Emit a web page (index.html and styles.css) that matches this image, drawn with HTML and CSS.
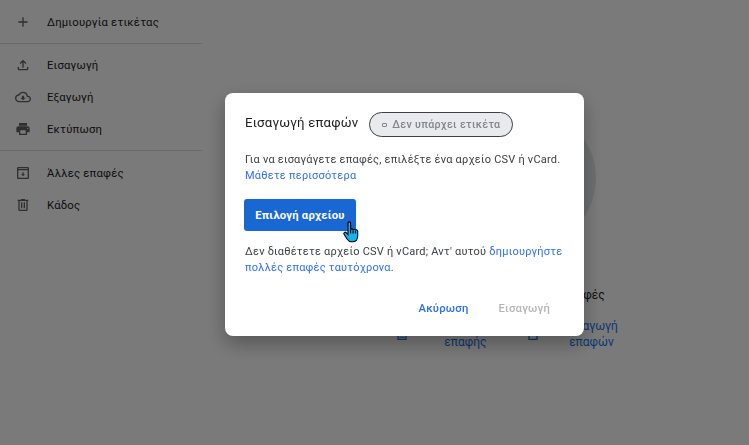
FILE: index.html
```html
<!DOCTYPE html>
<html lang="el">
<head>
    <meta charset="UTF-8">
    <meta name="viewport" content="width=device-width, initial-scale=1.0">
    <title>Εισαγωγή επαφών</title>
    <link rel="stylesheet" href="styles.css">
</head>
<body>
    <div class="page">
        <!-- Sidebar -->
        <nav class="sidebar">
            <div class="nav-group first">
                <div class="nav-item">
                    <svg class="nav-icon" viewBox="0 0 24 24"><path d="M19 13h-6v6h-2v-6H5v-2h6V5h2v6h6v2z"/></svg>
                    <span>Δημιουργία ετικέτας</span>
                </div>
            </div>
            <div class="nav-group">
                <div class="nav-item">
                    <svg class="nav-icon" viewBox="0 0 24 24"><path d="M18 15v3H6v-3H4v3c0 1.100.9 2 2 2h12c1.100 0 2-.9 2-2v-3h-2zM7 9l1.410 1.410L11 7.830V16h2V7.830l2.590 2.580L17 9l-5-5-5 5z"/></svg>
                    <span>Εισαγωγή</span>
                </div>
                <div class="nav-item">
                    <svg class="nav-icon" viewBox="0 0 24 24"><path d="M19.350 10.040A7.490 7.490 0 0 0 12 4C9.110 4 6.600 5.640 5.350 8.040A5.994 5.994 0 0 0 0 14c0 3.310 2.690 6 6 6h13c2.760 0 5-2.240 5-5 0-2.640-2.050-4.780-4.650-4.960zM19 18H6c-2.210 0-4-1.790-4-4 0-2.050 1.530-3.760 3.560-3.970l1.070-.11.5-.95A5.469 5.469 0 0 1 12 6c2.620 0 4.880 1.860 5.390 4.430l.3 1.500 1.530.11A2.980 2.980 0 0 1 22 15c0 1.650-1.350 3-3 3zm-5.550-8h-2.900v3H8l4 4 4-4h-2.550z"/></svg>
                    <span>Εξαγωγή</span>
                </div>
                <div class="nav-item">
                    <svg class="nav-icon" viewBox="0 0 24 24"><path d="M19 8H5c-1.660 0-3 1.340-3 3v6h4v4h12v-4h4v-6c0-1.660-1.340-3-3-3zm-3 11H8v-5h8v5zm3-7c-.55 0-1-.45-1-1s.45-1 1-1 1 .45 1 1-.45 1-1 1zm-1-9H6v4h12V3z"/></svg>
                    <span>Εκτύπωση</span>
                </div>
            </div>
            <div class="nav-group last">
                <div class="nav-item">
                    <svg class="nav-icon" viewBox="0 0 24 24"><path d="M19 3H5a2 2 0 0 0-2 2v14a2 2 0 0 0 2 2h14a2 2 0 0 0 2-2V5a2 2 0 0 0-2-2zm0 16H5V8h14v11zM5 6V5h14v1H5zm6 5v3H9l3 3 3-3h-2v-3h-2z"/></svg>
                    <span>Άλλες επαφές</span>
                </div>
                <div class="nav-item">
                    <svg class="nav-icon" viewBox="0 0 24 24"><path d="M15 4V3H9v1H4v2h1v13c0 1.100.9 2 2 2h10c1.100 0 2-.9 2-2V6h1V4h-5zm2 15H7V6h10v13zM9 8h2v9H9zm4 0h2v9h-2z"/></svg>
                    <span>Κάδος</span>
                </div>
            </div>
        </nav>

        <!-- Empty state behind the dialog -->
        <main class="content">
            <div class="empty-circle"></div>
            <div class="empty-title">Δεν υπάρχουν επαφές</div>
            <div class="empty-actions">
                <div class="empty-action">
                    <svg class="action-icon" viewBox="0 0 24 24"><path d="M5 3h14v18H5V3zm2 2v14h10V5H7zm1 11h8v1.500H8z"/></svg>
                    <span>Δημιουργία<br>επαφής</span>
                </div>
                <div class="empty-action">
                    <svg class="action-icon" viewBox="0 0 24 24"><path d="M5 4h14v17H5V4zm2 2v13h10V6H7zm4 9v-5h2v5h-2z"/></svg>
                    <span>Εισαγωγή<br>επαφών</span>
                </div>
            </div>
        </main>
    </div>

    <div class="overlay">
        <div class="dialog">
            <div class="dialog-head">
                <h2>Εισαγωγή επαφών</h2>
                <div class="chip"><i class="chip-dot"></i>Δεν υπάρχει ετικέτα</div>
            </div>
            <p class="text first-text">Για να εισαγάγετε επαφές, επιλέξτε ένα αρχείο CSV ή vCard.<br><a href="#">Μάθετε περισσότερα</a></p>
            <div class="file-row">
                <button class="file-btn">Επιλογή αρχείου</button>
                <svg class="cursor" viewBox="0 0 20 26"><path d="M6 2.500c0-2 3-2 3 0v7.500c0-1.500 2.800-1.500 2.800.3 0-1.500 2.700-1.300 2.700.5 0-1.300 2.500-1 2.500.8v5.400c0 3.500-2 6.500-5.500 6.500H10c-2.500 0-3.800-1.300-5-3.200L1.600 15c-1-1.800 1.200-3.300 2.600-1.700L6 15.300z"/><path class="cursor-line" d="M9 10v4M11.800 10.500V14M14.500 11v3"/></svg>
            </div>
            <p class="text">Δεν διαθέτετε αρχείο CSV ή vCard; Αντ' αυτού <a href="#">δημιουργήστε πολλές επαφές ταυτόχρονα</a>.</p>
            <div class="dialog-actions">
                <a class="action" href="#">Ακύρωση</a>
                <span class="action disabled">Εισαγωγή</span>
            </div>
        </div>
    </div>
</body>
</html>
```

FILE: styles.css
```css
* {
    box-sizing: border-box;
}
html, body {
    height: 100%;
}
body {
    margin: 0;
    font-family: Roboto, "Noto Sans", sans-serif;
    background: #fff;
    color: #202124;
    overflow: hidden;
}
.page {
    display: flex;
    height: 100vh;
}
.sidebar {
    width: 202px;
    flex: none;
}
.nav-group {
    padding: 5px 0;
    border-top: 1px solid #dadce0;
}
.nav-group.first {
    border-top: none;
    padding: 6px 0 5px;
}
.nav-group.last {
    padding-top: 6px;
}
.nav-item {
    display: flex;
    align-items: center;
    height: 32px;
    padding-left: 15px;
    font-size: 11.3px;
    letter-spacing: 0.2px;
}
.nav-icon {
    width: 16px;
    height: 16px;
    margin-right: 16px;
    fill: #5f6368;
}
.content {
    flex: 1;
    padding-top: 107px;
}
.empty-circle {
    width: 144px;
    height: 142px;
    margin-left: 250px;
    border-radius: 50%;
    background: #e6e8ea;
}
.empty-title {
    margin: 38px 0 0 281px;
    font-size: 12px;
    line-height: 16px;
}
.empty-actions {
    display: flex;
    margin: 15px 0 0 192px;
}
.empty-action {
    display: flex;
    align-items: center;
    gap: 24px;
    width: 131px;
    font-size: 12px;
    line-height: 16px;
    text-align: center;
    color: #1a73e8;
}
.action-icon {
    width: 16px;
    height: 16px;
    fill: #1a73e8;
}
.overlay {
    position: fixed;
    inset: 0;
    background: rgba(0, 0, 0, 0.52);
}
.dialog {
    position: absolute;
    left: 225px;
    top: 93px;
    width: 359px;
    height: 243px;
    padding: 19px 16px 0 20px;
    background: #fff;
    border-radius: 8px;
    box-shadow: 0 8px 20px rgba(0, 0, 0, 0.3);
}
.dialog-head {
    display: flex;
    align-items: flex-start;
    gap: 11px;
}
h2 {
    margin: 2px 0 0;
    font-size: 13.2px;
    line-height: 18px;
    font-weight: 400;
    letter-spacing: 0.2px;
    color: #202124;
}
.chip {
    display: flex;
    align-items: center;
    height: 25px;
    padding: 0 12px;
    border: 1px solid #3c4043;
    border-radius: 13px;
    background: #e8eaed;
    color: #80868b;
    font-size: 10.7px;
    font-weight: 500;
    letter-spacing: 0.3px;
}
.chip-dot {
    width: 5px;
    height: 4px;
    margin-right: 5px;
    border: 1px solid #80868b;
    border-radius: 1px;
}
.text {
    margin: 0;
    font-size: 11px;
    line-height: 16px;
    letter-spacing: 0.22px;
    color: #3c4043;
}
.first-text {
    margin-top: 15px;
}
a {
    color: #2f6ff0;
    text-decoration: none;
}
.file-row {
    position: relative;
    margin: 15px 0 13px;
    height: 32px;
}
.file-btn {
    width: 112px;
    height: 32px;
    margin-left: -1px;
    border: none;
    border-radius: 3px;
    background: #1967d2;
    color: #fff;
    font-family: inherit;
    font-size: 11.3px;
    font-weight: 700;
    letter-spacing: 0.2px;
}
.cursor {
    position: absolute;
    left: 97px;
    top: 22px;
    width: 19px;
    height: 23px;
    fill: #12b4f0;
    stroke: #000;
    stroke-width: 1.300;
}
.cursor-line {
    fill: none;
}
.dialog-actions {
    display: flex;
    justify-content: flex-end;
    gap: 30px;
    margin-top: 26px;
    padding-right: 18px;
}
.action {
    font-size: 11.3px;
    font-weight: 500;
    letter-spacing: 0.2px;
    color: #2a72e5;
}
.action.disabled {
    color: #b4b6b8;
}
```
